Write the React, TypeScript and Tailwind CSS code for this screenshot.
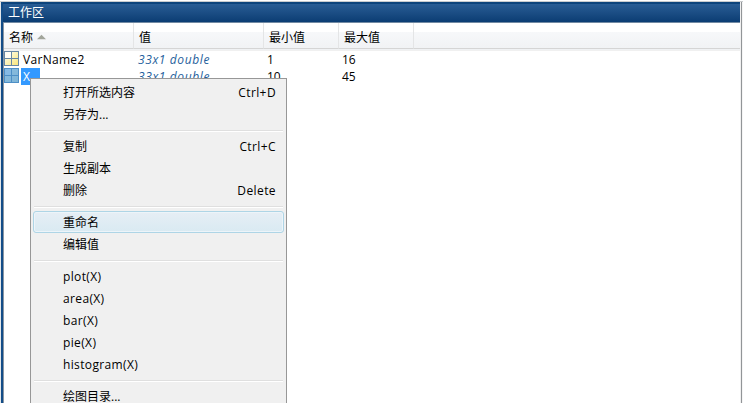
import React from 'react';

type Entry = { label: string; shortcut?: string; active?: boolean; latin?: boolean };

const groups: Entry[][] = [
  [{ label: '打开所选内容', shortcut: 'Ctrl+D' }, { label: '另存为...' }],
  [{ label: '复制', shortcut: 'Ctrl+C' }, { label: '生成副本' }, { label: '删除', shortcut: 'Delete' }],
  [{ label: '重命名', active: true }, { label: '编辑值' }],
  [
    { label: 'plot(X)', latin: true },
    { label: 'area(X)', latin: true },
    { label: 'bar(X)', latin: true },
    { label: 'pie(X)', latin: true },
    { label: 'histogram(X)', latin: true },
  ],
  [{ label: '绘图目录...' }],
];

const columns = [
  { label: '名称', width: 'w-[130px]', sorted: true },
  { label: '值', width: 'w-[130px]' },
  { label: '最小值', width: 'w-[75px]' },
  { label: '最大值', width: 'w-[75px]' },
];

const rows = [
  { name: 'VarName2', value: '33x1 double', min: '1', max: '16' },
  { name: 'X', value: '33x1 double', min: '10', max: '45', selected: true },
];

function MatrixIcon({ selected }: { selected?: boolean }) {
  const line = selected ? '#4d8fc6' : '#6787a5';
  const id = selected ? 'cellBlue' : 'cellYellow';
  return (
    <svg width="15" height="15" viewBox="0 0 15 15" shapeRendering="crispEdges" className="block shrink-0">
      <defs>
        <linearGradient id={id} x1="0" y1="0" x2="1" y2="1">
          <stop offset="0.1" stopColor={selected ? '#8abde0' : '#fffde8'} />
          <stop offset="1" stopColor={selected ? '#7db4d6' : '#f8e57c'} />
        </linearGradient>
      </defs>
      <path d="M0 0h15v15H0z" fill={line} />
      <path d="M1 1h6v6H1z" fill={selected ? '#86bae4' : '#fffef6'} />
      <path d="M8 1h6v6H8zM1 8h6v6H1zM8 8h6v6H8z" fill={`url(#${id})`} />
    </svg>
  );
}

function Menu() {
  return (
    <div className="absolute left-[30px] top-[78px] h-[325px] w-[257px] border border-b-0 border-[#979797] bg-[#f0f0f0] pt-[3px] text-black">
      {groups.map((group, g) => (
        <div key={g}>
          {g > 0 && (
            <div className="flex h-[10px] flex-col pl-[3px] pr-[3px] pt-[4px]">
              <div className="h-px bg-[#dfdfdf]" />
              <div className="h-px bg-white" />
            </div>
          )}
          {group.map((item) => (
            <div key={item.label} className="relative h-[22px] pl-[32px] pr-[10px]">
              {item.active && (
                <div className="absolute -top-px left-[2px] h-[22px] w-[251px] rounded-[3px] border border-[#aed5e6] bg-linear-to-b from-[#e6eef5] to-[#d9eaf2] shadow-[inset_0_0_0_1px_#edf4f9]" />
              )}
              <div className="relative flex justify-between leading-[22px]">
                <span className={item.latin ? 'tracking-[0.36px]' : ''}>{item.label}</span>
                <span className="tracking-[0.4px]">{item.shortcut}</span>
              </div>
            </div>
          ))}
        </div>
      ))}
    </div>
  );
}

export default function App() {
  return (
    <div className="relative flex h-[403px] w-[743px] flex-col overflow-hidden bg-white pt-px font-['Open_Sans','Noto_Sans_CJK_SC',sans-serif] text-[12px] text-black">
      <div className="h-px shrink-0 bg-[#c9ccce]" />
      <div className="flex min-h-0 flex-1">
        <div className="w-px bg-[#e3e7ea]" />
        <div className="w-[2px] bg-[#134d88]" />
        <div className="flex min-w-0 flex-1 flex-col">
          <div className="h-[20px] border-t-2 border-[#0d447c] bg-linear-to-b from-[#295d95] to-[#0b3d73] pl-[5px] leading-[17px] text-white">工作区</div>
          <div className="h-px bg-[#728aa3]" />
          <div className="flex flex-1 border-l border-[#8b97a3]">
            <div className="flex-1">
              <div className="flex h-[28px] border-b border-[#f0f0f0] bg-linear-to-b from-white from-[32%] via-[#f7f8fa] via-[32%] to-[#f0f2f4]">
                {columns.map((c) => (
                  <div key={c.label} className={`flex h-[26px] items-center border-b border-r border-b-[#d5d5d5] border-r-[#e4e5e6] pl-[5px] pt-[4px] leading-[18px] ${c.width}`}>
                    {c.label}
                    {c.sorted && (
                      <svg width="9" height="6" viewBox="0 0 10 6" className="ml-[4px] -mt-px">
                        <path d="M5 0.5L10 5.5H0z" fill="#a2a59b" />
                      </svg>
                    )}
                  </div>
                ))}
                <div className="h-[26px] flex-1 border-b border-[#d5d5d5]" />
              </div>
              {rows.map((r) => (
                <div key={r.name} className="flex h-[17px] items-start leading-[17px]">
                  <div className="flex w-[133px]">
                    <MatrixIcon selected={r.selected} />
                    {r.selected ? (
                      <span className="ml-[2px] h-[17px] w-[19px] bg-[#3399ff] pl-[2px] text-white">{r.name}</span>
                    ) : (
                      <span className="ml-[4px] tracking-[0.3px]">{r.name}</span>
                    )}
                  </div>
                  <span className="w-[130px] pl-px italic tracking-[0.62px] text-[#1f5f9c]">{r.value}</span>
                  <span className="w-[75px]">{r.min}</span>
                  <span>{r.max}</span>
                </div>
              ))}
            </div>
          </div>
        </div>
        <div className="w-px bg-[#f0f0f0]" />
        <div className="w-px bg-[#929598]" />
        <div className="w-px bg-[#f5f5f5]" />
      </div>
      <Menu />
    </div>
  );
}
